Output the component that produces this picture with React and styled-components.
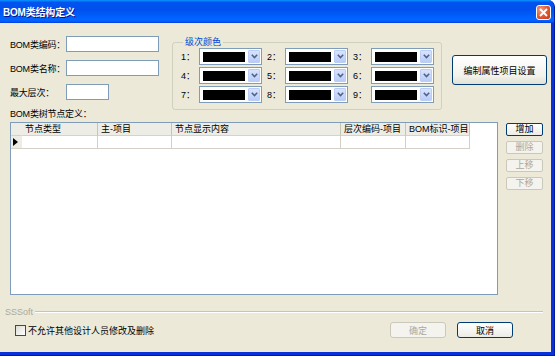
import React from "react";
import styled, { createGlobalStyle } from "styled-components";

const GlobalStyle = createGlobalStyle`
  body {
    margin: 0;
    background: #ffffff;
    font-family: "Liberation Sans", "Noto Sans CJK SC", sans-serif;
    font-size: 9px;
  }
`;

const columns = [
  { title: "节点类型", width: 76 },
  { title: "主-项目", width: 74 },
  { title: "节点显示内容", width: 169 },
  { title: "层次编码-项目", width: 65 },
  { title: "BOM标识-项目", width: 64 },
];

function Chevron() {
  return (
    <svg width="7" height="5" viewBox="0 0 7 5">
      <path d="M0.8 0.8 L3.5 3.6 L6.2 0.8" fill="none" stroke="#4D6185" strokeWidth="1.5" />
    </svg>
  );
}

function ColorCombo({ n }) {
  return (
    <ColorCell>
      <ColorLabel>{n}：</ColorLabel>
      <Combo>
        <Swatch />
        <DropBtn>
          <Chevron />
        </DropBtn>
      </Combo>
    </ColorCell>
  );
}

function App() {
  return (
    <>
      <GlobalStyle />
      <Window>
        <TitleBar>
          <Title>BOM类结构定义</Title>
          <CloseBtn>
            <svg width="9" height="9" viewBox="0 0 9 9">
              <path d="M1 1 L8 8 M8 1 L1 8" stroke="#fff" strokeWidth="1.8" />
            </svg>
          </CloseBtn>
        </TitleBar>
        <Client>
          <TopRow>
            <Form>
              <FormRow>
                <Label>BOM类编码：</Label>
                <TextBox w={93} />
              </FormRow>
              <FormRow>
                <Label>BOM类名称：</Label>
                <TextBox w={93} />
              </FormRow>
              <FormRow>
                <Label>最大层次：</Label>
                <TextBox w={43} />
              </FormRow>
            </Form>
            <Group>
              <Legend>级次颜色</Legend>
              <ColorRows>
                {[[1, 2, 3], [4, 5, 6], [7, 8, 9]].map((row) => (
                  <ColorRow key={row[0]}>
                    {row.map((n) => (
                      <ColorCombo key={n} n={n} />
                    ))}
                  </ColorRow>
                ))}
              </ColorRows>
            </Group>
            <BigButton>编制属性项目设置</BigButton>
          </TopRow>

          <TreeLabel>BOM类树节点定义：</TreeLabel>

          <MidRow>
            <GridBox>
              <GridTable>
                <HeadCell $corner />
                {columns.map((c) => (
                  <HeadCell key={c.title}>{c.title}</HeadCell>
                ))}
                <RowHead>
                  <svg width="5" height="8" viewBox="0 0 5 8">
                    <path d="M0 0 L5 4 L0 8 Z" fill="#000" />
                  </svg>
                </RowHead>
                {columns.map((c) => (
                  <DataCell key={c.title} />
                ))}
              </GridTable>
            </GridBox>
            <SideButtons>
              <SmallButton>增加</SmallButton>
              <SmallButton disabled>删除</SmallButton>
              <SmallButton disabled>上移</SmallButton>
              <SmallButton disabled>下移</SmallButton>
            </SideButtons>
          </MidRow>

          <Separator>
            <SepText>SSSoft</SepText>
            <SepLine />
          </Separator>

          <BottomRow>
            <CheckLabel>
              <CheckBox />
              不允许其他设计人员修改及删除
            </CheckLabel>
            <DialogButtons>
              <DialogButton disabled>确定</DialogButton>
              <DialogButton>取消</DialogButton>
            </DialogButtons>
          </BottomRow>
        </Client>
      </Window>
    </>
  );
}

export default App;

const Window = styled.div`
  width: 555px;
  height: 356px;
  box-sizing: border-box;
  display: flex;
  flex-direction: column;
  background: #0831D9;
  border-right: 1px solid #001C9C;
  border-bottom: 1px solid #001C9C;
  border-radius: 0 7px 0 0;
  overflow: hidden;
`;

const TitleBar = styled.div`
  height: 23px;
  flex: none;
  display: flex;
  align-items: center;
  justify-content: space-between;
  padding: 0 3px 0 3px;
  background: linear-gradient(
    to bottom,
    #0997ff 0%,
    #0053ee 10%,
    #0050ee 40%,
    #0066ff 85%,
    #005bff 93%,
    #003dd7 100%
  );
`;

const Title = styled.div`
  color: #ffffff;
  font-weight: bold;
  font-size: 10px;
  letter-spacing: -0.2px;
  text-shadow: 1px 1px #0f1089;
`;

const CloseBtn = styled.div`
  width: 15px;
  height: 15px;
  box-sizing: border-box;
  border: 1px solid #ffffff;
  border-radius: 3px;
  background: radial-gradient(circle at 30% 30%, #f49a7e, #e0562e 55%, #c2391a);
  display: flex;
  align-items: center;
  justify-content: center;
  margin-top: 1px;
`;

const Client = styled.div`
  flex: 1;
  margin-right: 3px;
  margin-bottom: 3px;
  background: #ECE9D8;
  display: flex;
  flex-direction: column;
  color: #000;
`;

const TopRow = styled.div`
  display: flex;
  align-items: flex-start;
  margin: 13px 0 0 10px;
`;

const Form = styled.div`
  width: 162px;
  display: flex;
  flex-direction: column;
  gap: 8px;
`;

const FormRow = styled.div`
  display: flex;
  align-items: center;
  height: 16px;
`;

const Label = styled.div`
  width: 56px;
  white-space: nowrap;
  letter-spacing: -0.2px;
`;

const TextBox = styled.div`
  width: ${(p) => p.w}px;
  height: 16px;
  box-sizing: border-box;
  border: 1px solid #7F9DB9;
  background: #ffffff;
`;

const Group = styled.fieldset`
  margin: 1px 0 0 0;
  padding: 1px 7px 6px 8px;
  width: 270px;
  box-sizing: border-box;
  border: 1px solid #D0D0BF;
  border-radius: 3px;
  min-inline-size: 0;
`;

const Legend = styled.legend`
  padding: 0 2px;
  margin-left: 2px;
  line-height: 10px;
  color: #0046D5;
`;

const ColorRows = styled.div`
  display: flex;
  flex-direction: column;
  gap: 2px;
`;

const ColorRow = styled.div`
  display: flex;
  gap: 5px;
`;

const ColorCell = styled.div`
  display: flex;
  align-items: center;
`;

const ColorLabel = styled.div`
  width: 18px;
  white-space: nowrap;
`;

const Combo = styled.div`
  width: 63px;
  height: 17px;
  box-sizing: border-box;
  border: 1px solid #7F9DB9;
  background: #ffffff;
  display: flex;
  align-items: center;
  padding: 0 1px 0 3px;
  gap: 3px;
`;

const Swatch = styled.div`
  width: 42px;
  height: 10px;
  background: #000000;
`;

const DropBtn = styled.div`
  width: 12px;
  height: 13px;
  box-sizing: border-box;
  border: 1px solid #BBCCF5;
  border-radius: 1px;
  background: linear-gradient(to bottom, #D8E3FD, #B9CCF8);
  display: flex;
  align-items: center;
  justify-content: center;
`;

const BigButton = styled.div`
  margin: 19px 0 0 10px;
  width: 95px;
  height: 30px;
  box-sizing: border-box;
  border: 1px solid #003C74;
  border-radius: 3px;
  background: linear-gradient(to bottom, #ffffff, #f3f2ec 70%, #e3e1d6);
  display: flex;
  align-items: center;
  justify-content: center;
  white-space: nowrap;
`;

const TreeLabel = styled.div`
  margin: -2px 0 0 10px;
  line-height: 12px;
  height: 12px;
  letter-spacing: -0.2px;
`;

const MidRow = styled.div`
  display: flex;
  align-items: flex-start;
  margin: 2px 0 0 10px;
`;

const GridBox = styled.div`
  width: 488px;
  height: 173px;
  box-sizing: border-box;
  border: 1px solid #7F9DB9;
  background: #ffffff;
`;

const GridTable = styled.div`
  display: grid;
  grid-template-columns: 11px ${columns.map((c) => c.width + "px").join(" ")};
  grid-auto-rows: 13px;
  width: max-content;
`;

const HeadCell = styled.div`
  box-sizing: border-box;
  background: #EEEDE5;
  border-right: 1px solid ${(p) => (p.$corner ? "#EEEDE5" : "#C7C5B2")};
  border-bottom: 1px solid #D6D3C2;
  padding-left: 3px;
  line-height: 12px;
  white-space: nowrap;
  overflow: hidden;
`;

const RowHead = styled.div`
  box-sizing: border-box;
  background: #EEEDE5;
  border-bottom: 1px solid #D6D3C2;
  display: flex;
  align-items: center;
  padding-left: 2px;
`;

const DataCell = styled.div`
  box-sizing: border-box;
  background: #ffffff;
  border-right: 1px solid #D4D0C8;
  border-bottom: 1px solid #D4D0C8;
`;

const SideButtons = styled.div`
  margin: 1px 0 0 8px;
  display: flex;
  flex-direction: column;
  gap: 5px;
`;

const SmallButton = styled.div`
  width: 37px;
  height: 13px;
  box-sizing: border-box;
  border: 1px solid ${(p) => (p.disabled ? "#CAC8BB" : "#003C74")};
  border-radius: 2px;
  background: ${(p) =>
    p.disabled ? "#F4F3EE" : "linear-gradient(to bottom, #ffffff, #ecebe6)"};
  color: ${(p) => (p.disabled ? "#ACA899" : "#000")};
  display: flex;
  align-items: center;
  justify-content: center;
  line-height: 11px;
`;

const Separator = styled.div`
  display: flex;
  align-items: center;
  height: 10px;
  margin: 12px 8px 0 5px;
  gap: 2px;
`;

const SepText = styled.div`
  color: #ACAA9C;
  font-size: 9px;
  line-height: 10px;
`;

const SepLine = styled.div`
  flex: 1;
  height: 0;
  border-top: 1px solid #C7C5B2;
  border-bottom: 1px solid #ffffff;
`;

const BottomRow = styled.div`
  display: flex;
  align-items: center;
  justify-content: space-between;
  height: 16px;
  margin: 5px 38px 0 15px;
`;

const CheckLabel = styled.div`
  display: flex;
  align-items: center;
  gap: 2px;
  white-space: nowrap;
`;

const CheckBox = styled.div`
  width: 11px;
  height: 11px;
  box-sizing: border-box;
  border: 1px solid #1C5180;
  background: linear-gradient(135deg, #DCDBD5, #ffffff);
`;

const DialogButtons = styled.div`
  display: flex;
  gap: 11px;
`;

const DialogButton = styled.div`
  width: 56px;
  height: 16px;
  box-sizing: border-box;
  border: 1px solid ${(p) => (p.disabled ? "#CAC8BB" : "#003C74")};
  border-radius: 3px;
  background: ${(p) =>
    p.disabled ? "#F4F3EE" : "linear-gradient(to bottom, #ffffff, #ecebe6)"};
  color: ${(p) => (p.disabled ? "#ACA899" : "#000")};
  display: flex;
  align-items: center;
  justify-content: center;
`;
